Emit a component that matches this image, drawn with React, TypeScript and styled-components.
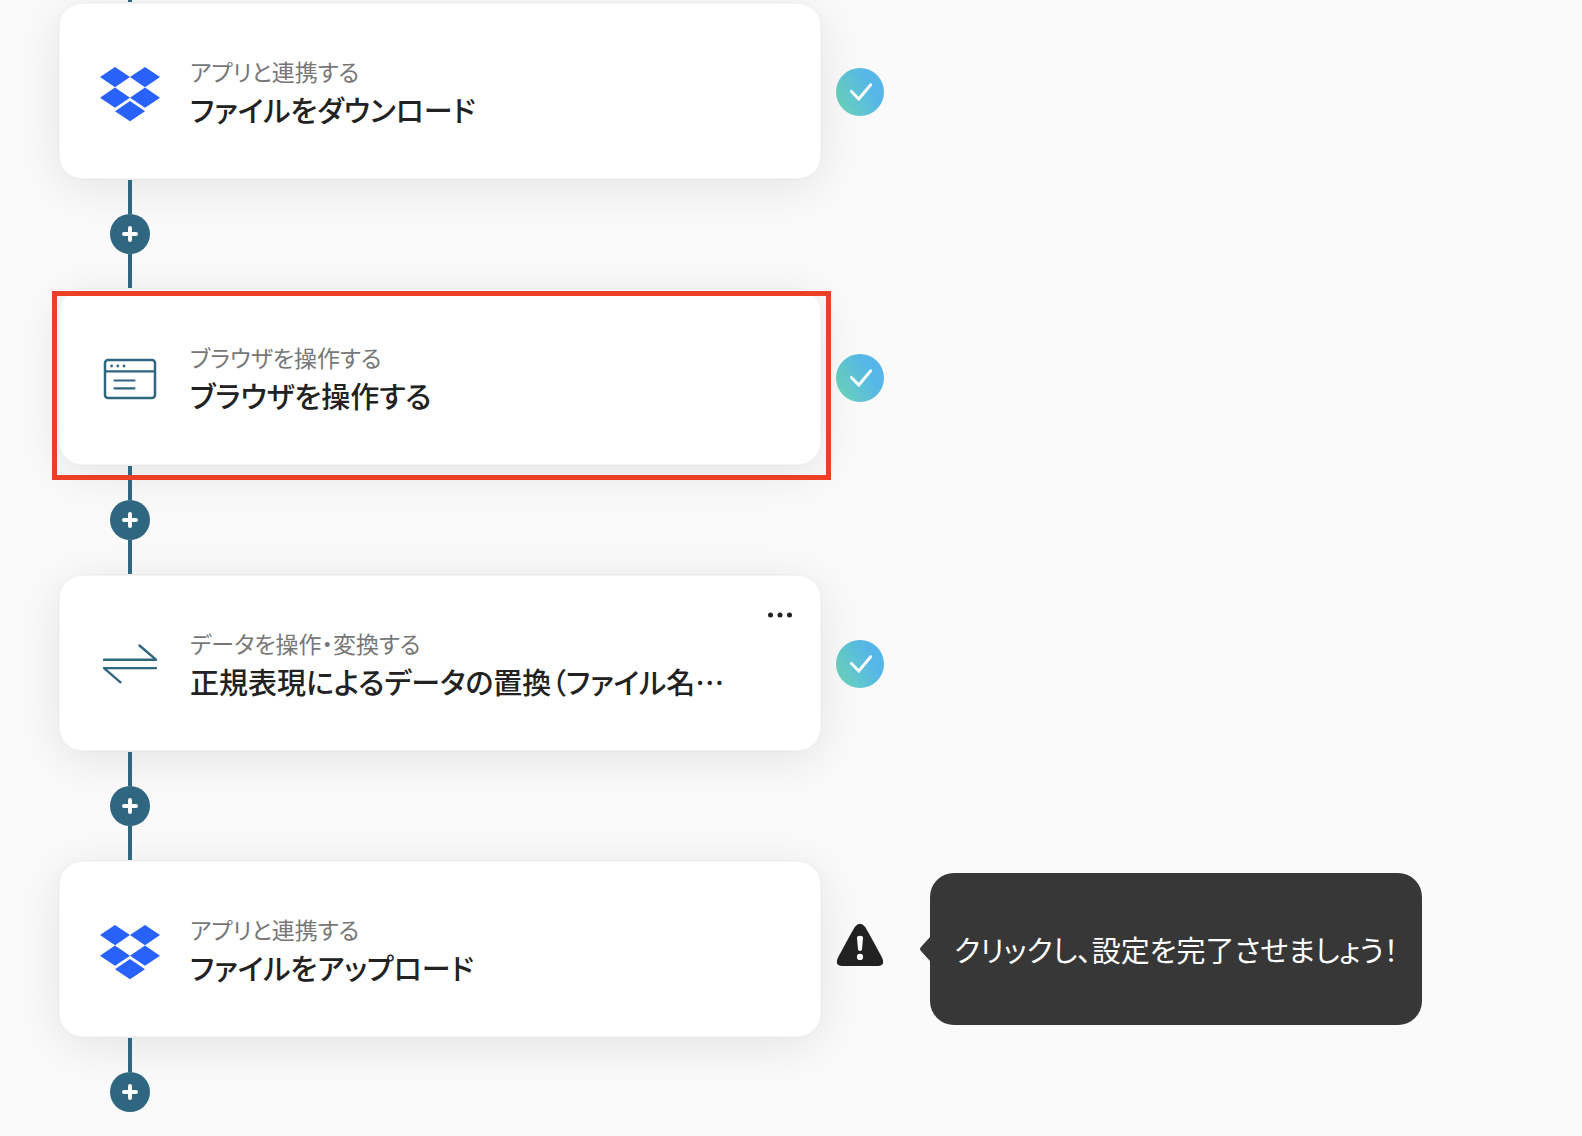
import React from "react";
import styled, { createGlobalStyle } from "styled-components";

const GlobalStyle = createGlobalStyle`
  *, *::before, *::after { box-sizing: border-box; }
  body {
    margin: 0;
    background: #fafafa;
    color: #222;
    font-family: "Noto Sans CJK JP", "Noto Sans", sans-serif;
    font-feature-settings: "palt";
  }
`;

const Page = styled.main`
  min-height: 100vh;
  padding: 0 58px 24px;
  overflow: hidden;
`;

const Flow = styled.ol`
  list-style: none;
  margin: 0;
  padding: 0;
`;

const Step = styled.li`
  display: flex;
  flex-direction: column;
`;

const StepRow = styled.div`
  display: flex;
  align-items: center;
`;

const Card = styled.article`
  position: relative;
  flex: 0 1 764px;
  min-width: 0;
  min-height: 178px;
  display: flex;
  align-items: center;
  gap: 30px;
  padding: 24px 28px 20px 40px;
  background: #fff;
  background-clip: padding-box;
  border: 2px solid rgba(0, 0, 0, 0.02);
  border-radius: 24px;
  box-shadow: 0 8px 48px rgba(0, 0, 0, 0.09);
`;

const Highlight = styled.div`
  position: absolute;
  inset: 1px -11px -16px -8px;
  border: 5px solid #eb4027;
  pointer-events: none;
  z-index: 2;
`;

const IconBox = styled.div`
  flex: none;
  width: 60px;
  height: 60px;
  svg { display: block; }
`;

const Texts = styled.div`
  flex: 1;
  min-width: 0;
`;

const Kind = styled.p`
  margin: 0;
  font-size: 23px;
  line-height: 32px;
  color: #777;
`;

const Title = styled.h2`
  margin: 0;
  font-size: 29px;
  line-height: 44px;
  font-weight: 500;
  white-space: nowrap;
`;

const Button = styled.button`
  margin: 0;
  padding: 0;
  border: 0;
  background: none;
  cursor: pointer;
`;

const MenuButton = styled(Button)`
  align-self: flex-start;
  display: flex;
  padding: 12px 0;
`;

const Status = styled.div`
  flex: none;
  width: 48px;
  margin: 2px 0 0 14px;
  svg { display: block; }
`;

const Tooltip = styled.div`
  position: relative;
  display: flex;
  align-items: center;
  min-height: 152px;
  margin-left: 46px;
  padding: 0 24px;
  border-radius: 24px;
  background: #373737;
  color: #fff;
  font-size: 29px;
  line-height: 44px;
  svg { position: absolute; right: 100%; }
`;

const Connector = styled.div`
  position: relative;
  z-index: 1;
  width: 40px;
  margin-left: 52px;
  display: flex;
  flex-direction: column;
  align-items: center;
`;

const Line = styled.span<{ $length: number }>`
  width: 4px;
  height: ${(p) => p.$length}px;
  background: #2f6680;
`;

const AddButton = styled(Button)`
  display: grid;
  place-items: center;
  width: 40px;
  height: 40px;
  border-radius: 50%;
  background: #2f6680;
`;

const DropboxIcon = () => (
  <svg width="60" height="60" viewBox="0 0 60 60" fill="#2961fb" aria-hidden="true">
    <path d="M15 4 30 14 15 24.200 0 14zM45 4 60 14 45 24.200 30 14zM15 24.600 30 34.700 15 44.800 0 34.700zM45 24.600 60 34.700 45 44.800 30 34.700zM30 38.100 45 48.200 30 58.300 15 48.200z" />
  </svg>
);

const BrowserIcon = () => (
  <svg width="60" height="60" viewBox="0 0 60 60" fill="none" stroke="#2f6680" strokeWidth="2.500" strokeLinecap="round" aria-hidden="true">
    <rect x="5" y="11" width="50" height="38" rx="3" />
    <path d="M5 22.400h50M14.500 31.500h20M14.500 39.300h20" strokeWidth="2.200" />
    <g fill="#2f6680" stroke="none">
      <circle cx="11.600" cy="17" r="1.400" />
      <circle cx="17.800" cy="17" r="1.400" />
      <circle cx="24" cy="17" r="1.400" />
    </g>
  </svg>
);

const ConvertIcon = () => (
  <svg width="60" height="60" viewBox="0 0 60 60" fill="none" stroke="#2f6680" strokeWidth="2.400" strokeLinecap="round" strokeLinejoin="round" aria-hidden="true">
    <path d="M4 24.700h52L39.500 10.500M56 33.100H4l16.500 14.200" />
  </svg>
);

const CheckIcon = () => (
  <svg width="48" height="48" viewBox="0 0 48 48" role="img" aria-label="設定済み">
    <defs>
      <linearGradient id="ok" x1="0.050" y1="0.750" x2="0.750" y2="0.400">
        <stop stopColor="#6ad3be" />
        <stop offset="1" stopColor="#56b6e8" />
      </linearGradient>
    </defs>
    <circle cx="24" cy="24" r="24" fill="url(#ok)" />
    <path d="M15.400 23.400 22.800 31 34.700 16.700" fill="none" stroke="#fff" strokeWidth="2.900" strokeLinecap="round" />
  </svg>
);

const WarningIcon = () => (
  <svg width="48" height="56" viewBox="0 0 48 56" role="img" aria-label="未設定">
    <path d="M18.800 4.900Q24-1.400 29.200 4.900Q31 7.500 46 35.500Q49.500 43.600 42.500 44H5.500Q-1.500 43.600 2 35.500Q17 7.500 18.800 4.900Z" fill="#222" />
    <path d="M21 16Q21 13.800 24 13.800T27 16L26 27.600Q25.800 29 24 29T22 27.600Z" fill="#fff" />
    <circle cx="24" cy="34.900" r="3.100" fill="#fff" />
  </svg>
);

const PlusIcon = () => (
  <svg width="16" height="16" viewBox="0 0 16 16" aria-hidden="true">
    <path d="M8 2v12M2 8h12" stroke="#fff" strokeWidth="4" strokeLinecap="round" />
  </svg>
);

const DotsIcon = () => (
  <svg width="24" height="6" viewBox="0 0 24 6" fill="#222" aria-hidden="true">
    <circle cx="2.500" cy="3" r="2.500" />
    <circle cx="12" cy="3" r="2.500" />
    <circle cx="21.500" cy="3" r="2.500" />
  </svg>
);

type StepData = {
  kind: string;
  title: string;
  icon: React.ReactNode;
  done: boolean;
  highlighted?: boolean;
  menu?: boolean;
  hint?: string;
};

const steps: StepData[] = [
  { kind: "アプリと連携する", title: "ファイルをダウンロード", icon: <DropboxIcon />, done: true },
  { kind: "ブラウザを操作する", title: "ブラウザを操作する", icon: <BrowserIcon />, done: true, highlighted: true },
  { kind: "データを操作・変換する", title: "正規表現によるデータの置換（ファイル名…", icon: <ConvertIcon />, done: true, menu: true },
  { kind: "アプリと連携する", title: "ファイルをアップロード", icon: <DropboxIcon />, done: false, hint: "クリックし、設定を完了させましょう！" },
];

export default function App() {
  return (
    <Page lang="ja">
      <GlobalStyle />
      <Connector><Line $length={2} /></Connector>
      <Flow>
        {steps.map((step, i) => (
          <Step key={i}>
            <StepRow>
              <Card>
                <IconBox>{step.icon}</IconBox>
                <Texts>
                  <Kind>{step.kind}</Kind>
                  <Title>{step.title}</Title>
                </Texts>
                {step.menu && <MenuButton type="button" aria-label="メニュー"><DotsIcon /></MenuButton>}
                {step.highlighted && <Highlight />}
              </Card>
              <Status>{step.done ? <CheckIcon /> : <WarningIcon />}</Status>
              {step.hint && (
                <Tooltip role="tooltip">
                  <svg width="10" height="24" viewBox="0 0 10 24" aria-hidden="true">
                    <path d="M10 0v24L1 14Q-1 12 1 10z" fill="#373737" />
                  </svg>
                  {step.hint}
                </Tooltip>
              )}
            </StepRow>
            <Connector>
              <Line $length={34} />
              <AddButton type="button" aria-label="ステップを追加"><PlusIcon /></AddButton>
              {i < steps.length - 1 && <Line $length={34} />}
            </Connector>
          </Step>
        ))}
      </Flow>
    </Page>
  );
}
